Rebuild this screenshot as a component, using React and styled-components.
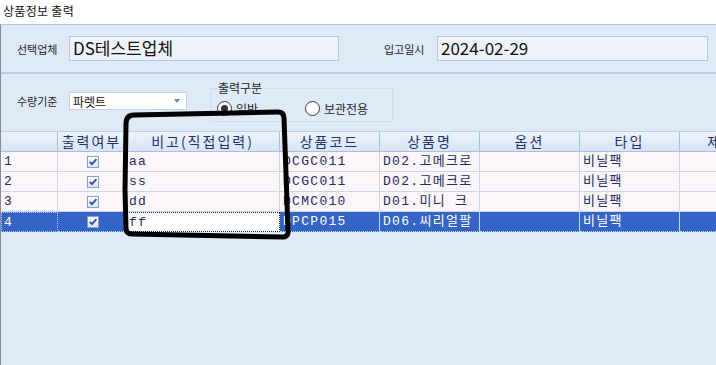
import React from 'react';
import styled, { createGlobalStyle, css } from 'styled-components';

const Global = createGlobalStyle`
  html, body { margin: 0; padding: 0; background: #fff; }
  body { font-family: "Noto Sans CJK KR", "Noto Sans", sans-serif; }
  * { box-sizing: border-box; }
`;

const Window = styled.div`
  position: relative;
  width: 716px;
  height: 365px;
  display: flex;
  flex-direction: column;
  overflow: hidden;
  background: #fff;
`;

const TitleBar = styled.div`
  height: 24px;
  flex: none;
  padding: 3px 0 0 3px;
  font-size: 12px;
  line-height: 16px;
  letter-spacing: 0.3px;
  color: #111;
  background: #fff;
`;

const Panel = styled.div`
  flex: 1;
  display: flex;
  flex-direction: column;
  background: #dfeaf9;
  border-top: 1px solid #a9c4e5;
  border-left: 1px solid #7f8c9c;
`;

const TopRow = styled.div`
  height: 49px;
  flex: none;
  display: flex;
  align-items: center;
  padding-left: 16px;
  border-bottom: 2px solid #b3ccec;
`;

const FieldLabel = styled.span`
  flex: none;
  width: ${p => p.$w}px;
  margin-left: ${p => p.$ml || 0}px;
  font-size: 11px;
  color: #222;
  white-space: nowrap;
`;

const ReadBox = styled.div`
  flex: none;
  width: ${p => p.$w}px;
  height: 25px;
  padding-left: 3px;
  background: #eef2f9;
  border: 1px solid #b6c7dd;
  font-size: 17px;
  line-height: 22px;
  color: #111;
  white-space: nowrap;
`;

const OptionRow = styled.div`
  height: 57px;
  flex: none;
  display: flex;
  align-items: flex-start;
  padding-left: 16px;
`;

const OptLabel = styled.span`
  flex: none;
  width: 52px;
  margin-top: 18px;
  font-size: 11px;
  line-height: 18px;
  color: #222;
`;

const Select = styled.div`
  flex: none;
  width: 118px;
  height: 18px;
  margin-top: 18px;
  display: flex;
  align-items: center;
  justify-content: space-between;
  padding: 0 6px 0 3px;
  background: #fff;
  border: 1px solid #c3d2e6;
  font-size: 12px;
  color: #111;
`;

const Arrow = styled.span`
  width: 0;
  height: 0;
  border-left: 3.5px solid transparent;
  border-right: 3.5px solid transparent;
  border-top: 4px solid #6a86b6;
`;

const Group = styled.fieldset`
  flex: none;
  width: 183px;
  height: 41px;
  margin: 7px 0 0 23px;
  padding: 4px 0 0 6px;
  border: 1px solid #d0dcec;
  min-width: 0;
`;

const Legend = styled.legend`
  padding: 0 1px;
  margin-left: 0;
  font-size: 12px;
  line-height: 14px;
  color: #222;
`;

const RadioRow = styled.div`
  display: flex;
  align-items: center;
  height: 18px;
`;

const RadioOpt = styled.label`
  flex: none;
  width: ${p => p.$w}px;
  display: flex;
  align-items: center;
  gap: 4px;
  font-size: 12px;
  color: #222;
`;

const RadioCircle = styled.span`
  width: 15px;
  height: 15px;
  border-radius: 50%;
  border: 1px solid #3a3a3a;
  background: #fff;
  display: flex;
  align-items: center;
  justify-content: center;
  &::after {
    content: '';
    width: 7px;
    height: 7px;
    border-radius: 50%;
    background: ${p => (p.$on ? '#333' : 'transparent')};
  }
`;

const Grid = styled.div`
  display: grid;
  grid-template-columns: 57px 68px 154px 100px 100px 100px 100px 100px;
  grid-auto-rows: 20px;
  width: 780px;
  border-top: 1px solid #bcd0ea;
`;

const HeadCell = styled.div`
  background: linear-gradient(#eef4fc, #d6e4f6);
  border-right: 1px solid #a8c0e0;
  border-bottom: 1px solid #a8c0e0;
  text-align: center;
  font-size: 14px;
  line-height: 19px;
  letter-spacing: 2px;
  color: #22336c;
  white-space: nowrap;
  overflow: hidden;
`;

const Cell = styled.div`
  background: #fcf5f9;
  border-right: 1px solid #c7d6ea;
  border-bottom: 1px solid #c7d6ea;
  padding-left: 3px;
  font-family: "Liberation Mono", "Noto Sans CJK KR", monospace;
  font-size: 13px;
  line-height: 19px;
  letter-spacing: 1.3px;
  color: #1d2d5e;
  white-space: nowrap;
  overflow: hidden;
  display: ${p => (p.$center ? 'flex' : 'block')};
  align-items: center;
  justify-content: center;
  ${p =>
    p.$sel &&
    css`
      background: #3465c6;
      color: #fff;
      border-bottom: 1px dotted #cfd9ea;
    `}
  ${p =>
    p.$edit &&
    css`
      background: #fff;
      color: #1d2d5e;
      border: 1px dotted #222;
      padding-left: 2px;
    `}
  ${p =>
    p.$focus &&
    css`
      border: 1px dotted #b8c6e0;
      padding-left: 2px;
    `}
`;

const CheckBox = styled.span`
  width: 12px;
  height: 12px;
  border: 1px solid #849fc8;
  background: linear-gradient(#ffffff, #d9e4f3);
  display: flex;
  align-items: center;
  justify-content: center;
`;

const Scribble = styled.svg`
  position: absolute;
  left: 0;
  top: 0;
  pointer-events: none;
`;

const columns = ['', '출력여부', '비고(직접입력)', '상품코드', '상품명', '옵션', '타입', '제조사'];

const rows = [
  { no: '1', memo: 'aa', code: 'DCGC011', name: 'D02.고메크로', type: '비닐팩' },
  { no: '2', memo: 'ss', code: 'DCGC011', name: 'D02.고메크로', type: '비닐팩' },
  { no: '3', memo: 'dd', code: 'DCMC010', name: 'D01.미니 크', type: '비닐팩' },
  { no: '4', memo: 'ff', code: 'DPCP015', name: 'D06.씨리얼팔', type: '비닐팩', sel: true },
];

const Check = () => (
  <CheckBox>
    <svg width="10" height="10" viewBox="0 0 10 10">
      <path d="M1.8 4.8 L4 7.2 L8.4 2.2" fill="none" stroke="#2c4f9c" strokeWidth="1.9" />
    </svg>
  </CheckBox>
);

export default function App() {
  return (
    <Window>
      <Global />
      <TitleBar>상품정보 출력</TitleBar>
      <Panel>
        <TopRow>
          <FieldLabel $w={52}>선택업체</FieldLabel>
          <ReadBox $w={270}>DS테스트업체</ReadBox>
          <FieldLabel $w={53} $ml={45}>입고일시</FieldLabel>
          <ReadBox $w={271}>2024-02-29</ReadBox>
        </TopRow>
        <OptionRow>
          <OptLabel>수량기준</OptLabel>
          <Select>
            <span>파렛트</span>
            <Arrow />
          </Select>
          <Group>
            <Legend>출력구분</Legend>
            <RadioRow>
              <RadioOpt $w={88}>
                <RadioCircle $on />
                일반
              </RadioOpt>
              <RadioOpt $w={80}>
                <RadioCircle />
                보관전용
              </RadioOpt>
            </RadioRow>
          </Group>
        </OptionRow>
        <Grid>
          {columns.map((c, i) => (
            <HeadCell key={i}>{c}</HeadCell>
          ))}
          {rows.map(r => (
            <React.Fragment key={r.no}>
              <Cell $sel={r.sel} $focus={r.sel}>{r.no}</Cell>
              <Cell $sel={r.sel} $center>
                <Check />
              </Cell>
              <Cell $sel={r.sel} $edit={r.sel}>{r.memo}</Cell>
              <Cell $sel={r.sel}>{r.code}</Cell>
              <Cell $sel={r.sel}>{r.name}</Cell>
              <Cell $sel={r.sel}></Cell>
              <Cell $sel={r.sel}>{r.type}</Cell>
              <Cell $sel={r.sel}></Cell>
            </React.Fragment>
          ))}
        </Grid>
      </Panel>
      <Scribble width="716" height="365" viewBox="0 0 716 365">
        <path
          d="M126 124 Q126 115 134 115 L278 112 Q284 112 284 118 L288 230 Q289 237 282 237 L132 234 Q126 234 126 228 L125 190 L126 124 Z"
          fill="none"
          stroke="#000"
          strokeWidth="5"
          strokeLinejoin="round"
        />
      </Scribble>
    </Window>
  );
}
